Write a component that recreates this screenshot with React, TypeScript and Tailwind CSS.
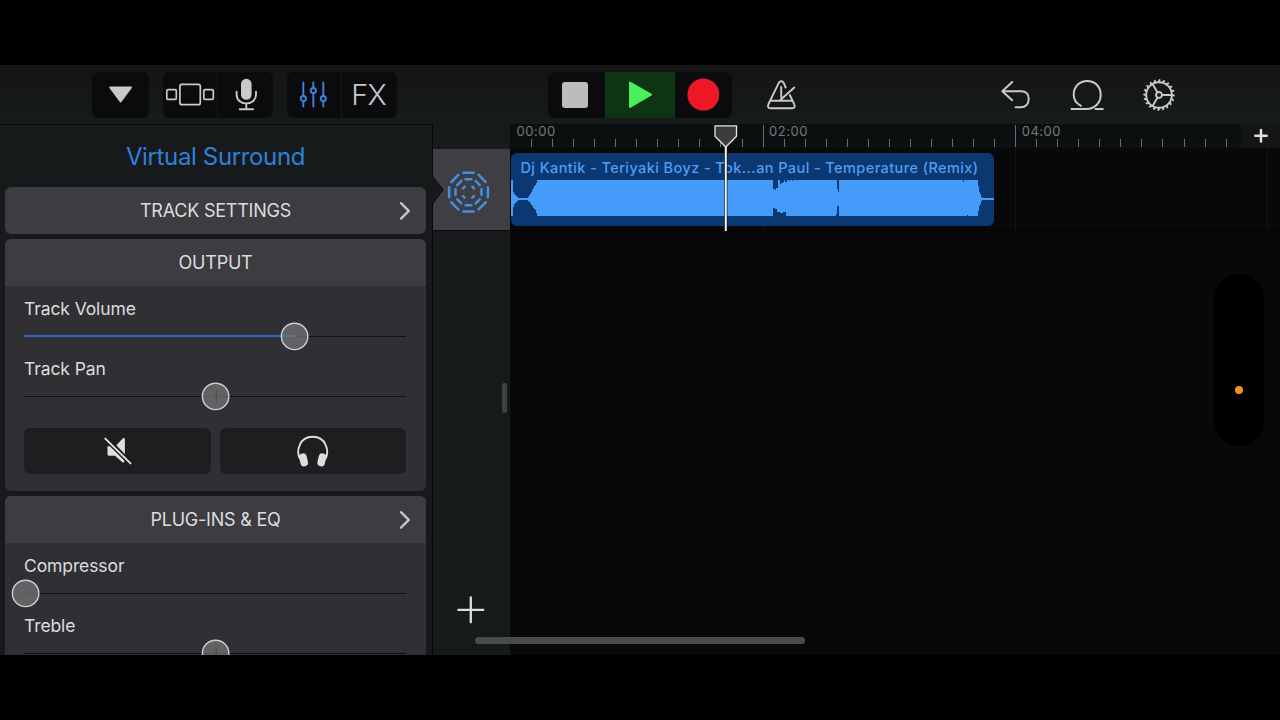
import type { ReactNode } from "react";

const TICKS = Array.from({ length: 35 }, (_, i) => i);
const LABELS: Record<number, string> = { 0: "00:00", 12: "02:00", 24: "04:00" };

function Toolbar() {
  return (
    <header className="relative z-10 flex h-[59px] shrink-0 items-center bg-linear-to-b from-[#141416] to-[#161b1c] pl-[92px] text-[#c9c8cb]">
      <div className="flex h-[46px] w-[57px] items-center justify-center rounded-md bg-[#0b0b0d]">
        <svg width="26" height="18" viewBox="0 0 26 18">
          <path d="M2.2 1.500h20.800L12.600 15.500z" fill="currentColor" stroke="currentColor" strokeWidth="2" strokeLinejoin="round" />
        </svg>
      </div>
      <div className="ml-3.5 flex h-[46px] w-[110px] rounded-md bg-[#0b0b0d]">
        <div className="flex w-[55px] items-center justify-center border-r border-[#18181b]">
          <svg width="50" height="24" viewBox="0 0 50 24" fill="none" stroke="currentColor" strokeWidth="1.7">
            <rect x="1.8" y="6.600" width="9.500" height="9.800" rx="1.2" />
            <rect x="14.900" y="1.300" width="20.400" height="20.400" rx="2" />
            <rect x="38.800" y="6.600" width="9.500" height="9.800" rx="1.2" />
          </svg>
        </div>
        <div className="flex w-[55px] items-center justify-center">
          <svg width="24" height="34" viewBox="0 0 24 34" fill="none" stroke="currentColor" strokeWidth="1.9" strokeLinecap="round">
            <rect x="7" y=".8" width="10.600" height="21" rx="5.3" fill="currentColor" stroke="none" />
            <path d="M2.6 13.600v2.8c0 5.400 4.200 9 9.700 9s9.700-3.600 9.700-9v-2.800M12.300 25.500v5.500M5.700 31.200h13.400" />
          </svg>
        </div>
      </div>
      <div className="ml-3.5 flex h-[46px] w-[110px] rounded-md bg-[#0b0b0d]">
        <div className="flex w-[55px] items-center justify-center border-r border-[#18181b]">
          <svg width="30" height="28" viewBox="0 0 30 28" fill="none" stroke="#3b82dc" strokeWidth="1.9" strokeLinecap="round">
            <path d="M4.300 1.500v13.500M4.300 20.300V25.500M14.300 1.500v5.300M14.300 12.300V25.500M24.300 1.500v13.500M24.300 20.300V25.500" />
            <circle cx="4.300" cy="17.600" r="2.600" />
            <circle cx="14.300" cy="9.600" r="2.600" />
            <circle cx="24.300" cy="17.600" r="2.600" />
          </svg>
        </div>
        <div className="flex w-[55px] items-center justify-center pr-[2px] text-[29px] font-light tracking-[-0.900px]">FX</div>
      </div>
      <div className="ml-[151px] flex h-[46px] w-[184px] overflow-hidden rounded-md bg-[#0b0b0d]">
        <div className="flex w-[57px] items-center pl-3.5">
          <div className="h-[26px] w-[26px] rounded-[3px] bg-[#bcbbbe]" />
        </div>
        <div className="flex w-[70px] items-center justify-center bg-[#0d3513]">
          <svg width="26" height="30" viewBox="0 0 26 30">
            <path d="M3 2.500v24.500L24 14.700z" fill="#4bee5b" stroke="#4bee5b" strokeWidth="2" strokeLinejoin="round" />
          </svg>
        </div>
        <div className="flex flex-1 items-center">
          <svg className="ml-3" width="32" height="34" viewBox="0 0 32 34">
            <circle cx="16.400" cy="16.600" r="16" fill="#ee1826" />
          </svg>
        </div>
      </div>
      <svg className="ml-[34px]" width="30" height="30" viewBox="0 0 30 30" fill="none" stroke="currentColor" strokeWidth="1.900" strokeLinecap="round" strokeLinejoin="round">
        <path d="M19.700 7.500 18.300 4.300C17.500 2 16.800 1.200 15.300 1.200S13 2 12.200 4.200L2.500 24c-1.100 2.700-.4 4.300 1.900 4.300h21.800c2.300 0 3-1.600 2-4.100L23.800 15" />
        <path d="M4.600 20.800h21.600M15.200 7v10.500M13.800 20.500 28.300 7.500" />
      </svg>
      <div className="ml-[204px] flex items-center">
        <svg width="32" height="32" viewBox="0 0 32 32" fill="none" stroke="currentColor" strokeWidth="2" strokeLinecap="round" strokeLinejoin="round">
          <path d="M12.200 3 2.300 12.200l9.900 9M2.800 12.200h18.700c4.200 0 7.200 3 7.200 7.500 0 5.400-3.300 8.500-7.800 8.500h-5.300" />
        </svg>
        <svg className="ml-[37px]" width="36" height="34" viewBox="0 0 36 34" fill="none" stroke="currentColor" strokeWidth="2" strokeLinecap="round" strokeLinejoin="round">
          <path d="M2.500 31h14.800c8.300 0 14.400-5.900 14.400-14.200C31.700 8.700 25.800 2.900 18.200 2.900S4.700 8.700 4.700 16.600c0 4.600 2.300 8.800 7.300 11.200M26.500 31h7.300" />
        </svg>
        <svg className="ml-[37px]" width="34" height="34" viewBox="-17 -17 34 34" fill="none" stroke="currentColor" strokeWidth="1.900" strokeLinecap="round">
          <circle r="12.800" />
          <circle r="3" />
          <path d="M3 0h9.800M-1.500-2.600-6.400-11M-1.500 2.600-6.400 11" />
          {Array.from({ length: 20 }, (_, i) => (
            <path key={i} d="M13.500-.2 14.900.6" transform={`rotate(${i * 18})`} />
          ))}
        </svg>
      </div>
    </header>
  );
}

function Slider({ label, thumb, fill, mid }: { label: string; thumb: number; fill?: boolean; mid?: boolean }) {
  return (
    <div className="h-[60px] shrink-0">
      <div className="h-6 pt-px text-[17.500px] leading-6 tracking-[-0.100px] text-[#dddddf]">{label}</div>
      <div className="relative mt-[3px] flex h-7 items-center">
        <div className="h-px w-full bg-[#111113]" />
        {fill && <div className="absolute top-[12.500px] left-0 h-[2px] bg-[#2a66bd]" style={{ width: thumb }} />}
        <svg className="absolute -top-px -ml-[15px]" style={{ left: thumb }} width="30" height="30" viewBox="0 0 30 30">
          <circle cx="14.600" cy="14.400" r="13.200" fill="#77777b" fillOpacity=".7" stroke="#cfcfd2" strokeWidth="1.400" />
          {mid && <path d="M15.300 9v11" stroke="#48484b" strokeWidth="1" />}
        </svg>
      </div>
    </div>
  );
}

function CardHeader({ children, arrow }: { children: ReactNode; arrow?: boolean }) {
  return (
    <div className="flex h-[47px] shrink-0 items-center bg-[#3d3c40] text-[#dcdcde]">
      <span className="w-[30px]" />
      <span className="flex-1 text-center text-[18px] tracking-[-0.220px]">{children}</span>
      <span className="w-[30px]">
        {arrow && (
          <svg width="16" height="20" viewBox="0 0 16 20" fill="none" stroke="#c4c4c7" strokeWidth="2.400" strokeLinecap="round" strokeLinejoin="round">
            <path d="M5 2.200 12.800 9.900 5 17.600" />
          </svg>
        )}
      </span>
    </div>
  );
}

function SidePanel() {
  return (
    <aside className="flex w-[432px] shrink-0 flex-col overflow-hidden border-t border-[#0b0e0f] bg-[#161a1b] pr-1.5 pl-[5px]">
      <h1 className="flex h-[62px] shrink-0 items-center justify-center pt-px text-[24px] tracking-[-0.360px] text-[#2f80dc]">Virtual Surround</h1>
      <div className="shrink-0 overflow-hidden rounded-md">
        <CardHeader arrow>TRACK SETTINGS</CardHeader>
      </div>
      <section className="mt-[5px] h-[252px] shrink-0 overflow-hidden rounded-md bg-[#303034]">
        <CardHeader>OUTPUT</CardHeader>
        <div className="pt-[9.500px] pr-5 pl-[19px]">
          <Slider label="Track Volume" thumb={270.5} fill />
          <Slider label="Track Pan" thumb={191.5} mid />
          <div className="mt-[12.500px] flex gap-[9px]">
            <button className="flex h-[46px] flex-1 items-center justify-center rounded-md bg-[#1e1e21]">
              <svg width="30" height="30" viewBox="0 0 30 30" fill="#dededf">
                <path d="M14.300 9.200 20.700 2.600c1-.9 2.200-.5 2.200 1v14.600zM5.500 10.200h2.600L22.300 24.500v1c0 1.100-1.200 1.500-2.200.5L13 19.700H6.900c-.9 0-1.400-.500-1.400-1.400z" />
                <path d="M3.300 2.600 28.500 27.200" stroke="#1e1e21" strokeWidth="4.200" />
                <path d="M3.300 2.600 28.500 27.400" stroke="#dededf" strokeWidth="2" strokeLinecap="round" />
              </svg>
            </button>
            <button className="flex h-[46px] flex-1 items-center justify-center rounded-md bg-[#1e1e21]">
              <svg width="32" height="34" viewBox="0 0 32 34" fill="none">
                <path d="M3 25C.600 20.500 1.100 14.500 2.800 10.800 5 5.500 9.800 2.700 15.700 2.700S26.400 5.500 28.600 10.800C30.300 14.500 30.800 20.500 28.400 25" stroke="#dededf" strokeWidth="1.900" />
                <rect x="2.800" y="19.300" width="7.600" height="13.200" rx="3.700" transform="rotate(-13 6.600 26)" fill="#dededf" />
                <rect x="21" y="19.300" width="7.600" height="13.200" rx="3.700" transform="rotate(13 24.800 26)" fill="#dededf" />
              </svg>
            </button>
          </div>
        </div>
      </section>
      <section className="mt-[5px] h-[252px] shrink-0 overflow-hidden rounded-md bg-[#303034]">
        <CardHeader arrow>PLUG-INS &amp; EQ</CardHeader>
        <div className="pt-[9.500px] pr-5 pl-[19px]">
          <Slider label="Compressor" thumb={2} />
          <Slider label="Treble" thumb={191.5} mid />
        </div>
      </section>
    </aside>
  );
}

function TrackHeaders() {
  return (
    <div className="relative flex w-[78px] shrink-0 flex-col border-l border-[#060808] bg-[#161a1b]">
      <div className="mt-[25px] flex h-[82px] shrink-0 items-center justify-center border-b border-[#08090a] bg-[#3f3e42] pt-[5px] pr-[6px]">
        <svg width="46" height="46" viewBox="-22.500 -23.200 46 46" stroke="#4091e6" strokeWidth="2.500" strokeLinecap="round">
          {[0, 45, 90, 135, 180, 225, 270, 315].map((a) => (
            <g key={a} transform={`rotate(${a})`}>
              <path d="M-5-19.400h10M-2.900-13h5.800" />
              {a % 90 === 45 && <path d="M-1.200-6.600h2.400" />}
            </g>
          ))}
        </svg>
      </div>
      <svg className="absolute top-[50px] left-[-1px]" width="13" height="32" viewBox="0 0 13 32">
        <path d="M0 2 11 16 0 30z" fill="#161a1b" />
        <path d="M.5 2 11 16 .5 30" fill="none" stroke="#060808" />
      </svg>
      <div className="flex-1" />
      <svg className="mb-[30px] ml-[23px]" width="30" height="30" viewBox="0 0 30 30" stroke="#dcdcde" strokeWidth="2.300" strokeLinecap="round">
        <path d="M2.300 14.900h25M14.800 2.300v25" />
      </svg>
      <div className="absolute top-[259px] right-[3px] h-[30px] w-[5px] rounded-[2px] bg-[#3f4243]" />
    </div>
  );
}

function Ruler() {
  return (
    <div className="flex h-6 shrink-0 bg-[#0b0f10]">
      <div className="flex w-[731px] items-end overflow-hidden">
        {TICKS.map((i) =>
          i in LABELS ? (
            <div key={i} className="flex h-full w-[21.050px] shrink-0">
              <div className={i === 0 ? "w-0" : "mt-px h-[22px] w-px shrink-0 bg-[#6c6f70]"} />
              <span className={`${i === 0 ? "pl-[6.500px]" : "pl-[5.500px]"} text-[13px] leading-[15px] tracking-[0.550px] whitespace-nowrap text-[#77797a]`}>
                {LABELS[i]}
              </span>
            </div>
          ) : (
            <div key={i} className="h-[9px] w-[21.050px] shrink-0">
              <div className="h-2 w-px bg-[#6c6f70]" />
            </div>
          ),
        )}
      </div>
      <div className="flex flex-1 items-center justify-center bg-[#141516]">
        <svg width="16" height="16" viewBox="0 0 16 16" stroke="#dedede" strokeWidth="2.500" strokeLinecap="round">
          <path d="M2.300 7.800h11.400M8 2.100v11.400" />
        </svg>
      </div>
    </div>
  );
}

function Region() {
  return (
    <div className="relative h-[73px] w-[483px] overflow-hidden rounded-md bg-[#0b3870]">
      <div className="pt-[5px] pl-[9.500px] text-[14.500px] leading-5 font-medium tracking-[0.410px] whitespace-nowrap text-[#4f9df6]">
        Dj Kantik - Teriyaki Boyz - Tok...an Paul - Temperature (Remix)
      </div>
      <svg className="absolute top-0 left-0" width="483" height="73" viewBox="0 0 483 73" shapeRendering="crispEdges">
        <path
          fill="#459bfa"
          d="M0 27H1.500L2 38 4 42 7 45H16.500L20 40 22 36 25 31 26.500 27H467L468 38 470 42 471 45H483V47H471L470 50 468 54 467 63H26.500L25 58 22 54 20 51 16.500 47H7L4 50 2 55 1.500 63H0z"
        />
        <path
          fill="#0b3870"
          d="M262 27h5v8h-2v2h-1v-1h-2zM269 27h4v2h-1v1h-2v1h-1zM274 27h2v2h-2zM278 27h1v1h-1zM281 27h1v1h-1zM262 63v-8h2v1h2v3h3v1h3v-1h3v4zM327 27h1v12h-1v-3h-1v-9zM326 63v-2h-1v2zM326 63v-10h2v10zM452 27h1v2h-1zM456 62h1v1h-1z"
        />
      </svg>
    </div>
  );
}

function Timeline() {
  return (
    <main className="relative flex min-w-0 flex-1 flex-col bg-[#080808]">
      <Ruler />
      <div className="relative flex h-[83px] shrink-0 border-b border-[#020202] pt-[5px] pl-px">
        <div className="absolute inset-y-0 left-[253px] w-[253px] border-x border-[#131415]" />
        <div className="absolute inset-y-0 left-[757px] w-px bg-[#131415]" />
        <Region />
      </div>
      <svg className="absolute top-0 left-[203px]" width="26" height="108" viewBox="0 0 26 108">
        <path d="M12.800 22v85" stroke="#07101c" strokeWidth="3.200" />
        <path d="M12.800 22v85" stroke="#f2f2f2" strokeWidth="2" />
        <path d="M2 1.800h21.500v10.400L12.800 23 2 12.200z" fill="#3c3c3e" stroke="#e6e6e6" strokeWidth="1.300" />
      </svg>
      <div className="absolute top-[150px] right-[16px] flex h-[172px] w-[50px] justify-center rounded-full bg-black">
        <div className="mt-[111.500px] h-2 w-2 rounded-full bg-[#f5921e]" />
      </div>
    </main>
  );
}

export default function App() {
  return (
    <div className="h-[720px] w-[1280px] overflow-hidden bg-black py-[65px] font-['Inter','Liberation_Sans',sans-serif]">
      <div className="relative flex h-[590px] flex-col overflow-hidden">
        <Toolbar />
        <div className="flex min-h-0 flex-1">
          <SidePanel />
          <TrackHeaders />
          <Timeline />
        </div>
        <div className="absolute top-[572px] left-[475px] h-[7px] w-[330px] rounded-full bg-[#4a4b4c]" />
      </div>
    </div>
  );
}
